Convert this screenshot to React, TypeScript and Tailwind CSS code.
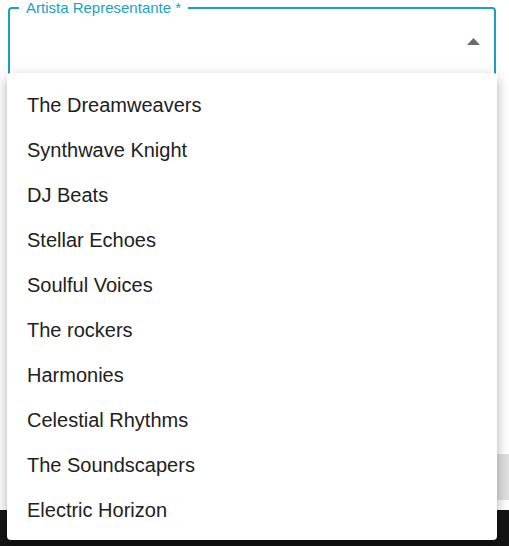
import React from "react";

const artists = [
  "The Dreamweavers",
  "Synthwave Knight",
  "DJ Beats",
  "Stellar Echoes",
  "Soulful Voices",
  "The rockers",
  "Harmonies",
  "Celestial Rhythms",
  "The Soundscapers",
  "Electric Horizon",
];

export default function App() {
  return (
    <div
      className="relative flex h-[546px] w-[509px] flex-col overflow-hidden bg-white"
      style={{ fontFamily: '"Liberation Sans", Arial, sans-serif' }}
    >
      <div className="pl-[8px] pr-[13px] pt-[7px]">
        <div className="relative h-[70px] rounded-[4px] border-2 border-[#1b9fc6]">
          <span className="absolute left-[9px] top-[-9px] bg-white px-[7px] text-[15px] leading-[15px] text-[#1b9fc6]">
            Artista Representante *
          </span>
          <svg
            className="absolute right-[14px] top-[29px]"
            width="13"
            height="7"
            viewBox="0 0 13 7"
          >
            <polygon points="6.5,0 13,7 0,7" fill="#6b6b6b" />
          </svg>
        </div>
      </div>
      <div className="flex flex-1 items-end justify-end pb-[10px]">
        <div className="h-[46px] w-[200px] bg-[#e0e0e0]" />
      </div>
      <div className="h-[36px] bg-[#151515]" />

      <div className="absolute left-[7px] top-[73px] w-[490px] rounded-[4px] bg-white pb-[8px] pt-[9px] shadow-[0px_5px_5px_-3px_rgba(0,0,0,0.2),0px_8px_10px_1px_rgba(0,0,0,0.14),0px_3px_14px_2px_rgba(0,0,0,0.12)]">
        {artists.map((a) => (
          <div
            key={a}
            className="flex h-[45px] items-center pl-[20px] text-[20px] text-[#212121]"
          >
            {a}
          </div>
        ))}
      </div>
    </div>
  );
}
